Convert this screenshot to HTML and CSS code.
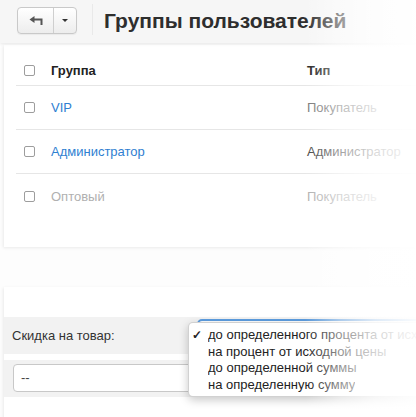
FILE: index.html
```html
<!DOCTYPE html>
<html lang="ru">
<head>
<meta charset="utf-8">
<title>Группы пользователей</title>
<link rel="stylesheet" href="styles.css">
</head>
<body>
<div class="page">
  <div class="header">
    <div class="btn-group">
      <span class="btn btn-back">
        <svg width="14" height="9" viewBox="0 0 14 9"><path d="M5 3.5 H12.5 V9" fill="none" stroke="#555" stroke-width="2"/><path d="M0.5 3.5 L5.5 0 V7 Z" fill="#555"/></svg>
      </span>
      <span class="btn btn-caret"><span class="caret"></span></span>
    </div>
    <span class="vsep"></span>
    <h1 class="title">Группы пользователей</h1>
  </div>

  <div class="card card-table">
    <div class="row row-head">
      <span class="cb"></span>
      <span class="c1">Группа</span>
      <span class="c2">Тип</span>
    </div>
    <div class="row">
      <span class="cb"></span>
      <span class="c1 link">VIP</span>
      <span class="c2 type">Покупатель</span>
    </div>
    <div class="row">
      <span class="cb"></span>
      <span class="c1 link">Администратор</span>
      <span class="c2 type dark">Администратор</span>
    </div>
    <div class="row row-last">
      <span class="cb"></span>
      <span class="c1 muted">Оптовый</span>
      <span class="c2 muted">Покупатель</span>
    </div>
  </div>

  <div class="card card-form">
    <div class="band band-label">Скидка на товар:</div>
    <div class="band band-input"><div class="input">--</div></div>
  </div>

  <div class="select-focus"></div>
  <div class="menu">
    <div class="item"><span class="check">✓</span><span class="label">до определенного процента от исходной цены</span></div>
    <div class="item"><span class="check"></span><span class="label">на процент от исходной цены</span></div>
    <div class="item"><span class="check"></span><span class="label">до определенной суммы</span></div>
    <div class="item"><span class="check"></span><span class="label">на определенную сумму</span></div>
  </div>

  <div class="fade"></div>
</div>
</body>
</html>
```

FILE: styles.css
```css
html, body {
  margin: 0;
  padding: 0;
}
body {
  background: #fdfdfd;
  font-family: "Liberation Sans", Arial, sans-serif;
  color: #333;
}
.page {
  position: relative;
  width: 416px;
  height: 417px;
  overflow: hidden;
}
.header {
  height: 43px;
  box-sizing: border-box;
  background: #f6f6f6;
  display: flex;
  align-items: flex-start;
  padding: 7px 0 0 17px;
  box-shadow: 0 1px 3px rgba(0,0,0,0.09);
  position: relative;
  z-index: 1;
}
.btn-group {
  display: flex;
  height: 27px;
  border: 1px solid #c9c9c9;
  border-radius: 4px;
  box-sizing: border-box;
  background: linear-gradient(#ffffff, #ededed);
  box-shadow: 0 1px 1px rgba(0,0,0,0.05);
}
.btn {
  display: flex;
  align-items: center;
  justify-content: center;
}
.btn-back {
  width: 35px;
  border-right: 1px solid #cfcfcf;
}
.btn-caret {
  width: 22px;
}
.caret {
  width: 0;
  height: 0;
  border-left: 3px solid transparent;
  border-right: 3px solid transparent;
  border-top: 3px solid #333;
}
.vsep {
  width: 1px;
  height: 31px;
  margin: -3px 0 0 15px;
  background: #e9e9e9;
}
.title {
  margin: 0 0 0 11px;
  font-size: 21px;
  font-weight: bold;
  line-height: 27px;
  color: #2e2e2e;
  white-space: nowrap;
}
.card {
  margin-left: 4px;
  background: #fff;
  box-shadow: -1px 1px 3px rgba(0,0,0,0.08);
}
.card-table {
  margin-top: 2px;
  height: 202px;
}
.row {
  display: flex;
  align-items: center;
  height: 44px;
  margin-left: 12px;
  border-bottom: 1px solid #e6e6e6;
  box-sizing: border-box;
  font-size: 13px;
  white-space: nowrap;
}
.row-head {
  height: 41px;
  padding-top: 10px;
  font-weight: bold;
  color: #222;
}
.row-last {
  border-bottom: none;
}
.cb {
  width: 11px;
  height: 11px;
  box-sizing: border-box;
  border: 1px solid #9d9d9d;
  border-radius: 2px;
  background: #fff;
  margin-left: 8px;
  flex: none;
}
.c1 {
  width: 256px;
  margin-left: 16px;
  flex: none;
}
.link {
  color: #2f80d1;
}
.type {
  color: #777;
}
.type.dark {
  color: #444;
}
.muted {
  color: #b0b0b0;
}
.card-form {
  margin-top: 40px;
  height: 140px;
  padding-top: 30px;
  box-sizing: border-box;
}
.band {
  background: #f2f2f2;
}
.band-label {
  height: 37px;
  display: flex;
  align-items: center;
  padding-left: 8px;
  font-size: 13px;
  color: #333;
}
.band-input {
  margin-top: 6px;
  height: 37px;
  padding: 4px 0 0 9px;
  box-sizing: border-box;
}
.input {
  width: 360px;
  height: 28px;
  box-sizing: border-box;
  border: 1px solid #c8c8c8;
  border-radius: 4px;
  background: #fff;
  font-size: 13px;
  line-height: 26px;
  padding-left: 7px;
  color: #444;
}
.select-focus {
  position: absolute;
  left: 197px;
  top: 319px;
  width: 300px;
  height: 30px;
  border: 2px solid #5d9de0;
  border-radius: 5px;
  box-sizing: border-box;
  background: #fff;
}
.menu {
  position: absolute;
  left: 188px;
  top: 322px;
  width: 300px;
  height: 75px;
  box-sizing: border-box;
  padding-top: 4px;
  background: #fff;
  border: 1px solid rgba(0,0,0,0.18);
  border-radius: 5px;
  box-shadow: 0 3px 10px rgba(0,0,0,0.22);
  font-size: 13px;
  color: #222;
}
.item {
  display: flex;
  line-height: 16.5px;
  white-space: nowrap;
}
.check {
  width: 19px;
  padding-left: 3px;
  box-sizing: border-box;
  flex: none;
  font-size: 12px;
  font-weight: bold;
}
.label {
  overflow: hidden;
  max-width: 210px;
}
.fade {
  position: absolute;
  inset: 0;
  pointer-events: none;
  z-index: 5;
  background: linear-gradient(to right,
    rgba(255,255,255,0) 0,
    rgba(255,255,255,0) 305px,
    rgba(255,255,255,0.5) 340px,
    rgba(255,255,255,0.8) 375px,
    rgba(255,255,255,0.96) 416px);
}
```
